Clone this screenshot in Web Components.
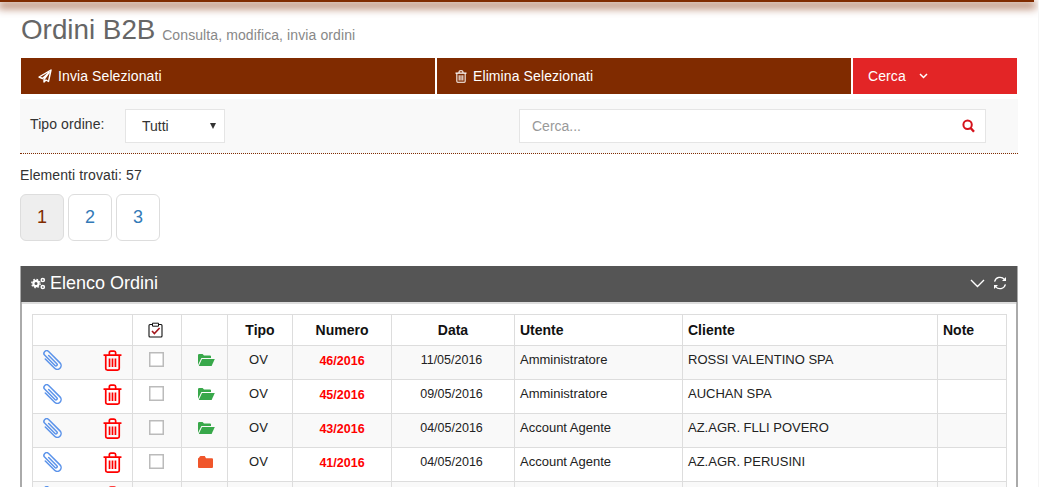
<!DOCTYPE html>
<html lang="it">
<head>
<meta charset="utf-8">
<title>Ordini B2B</title>
<style>
  html, body { margin: 0; height: 487px; overflow: hidden; background: #fff; }
  body { box-sizing: border-box; width: 1039px; border-right: 1px solid #f5f5f5; font-family: "Liberation Sans", Arial, sans-serif; font-size: 13px; color: #333; }
</style>
</head>
<body>
<top-strip></top-strip>
<page-title subtitle="Consulta, modifica, invia ordini">Ordini B2B</page-title>
<action-bar></action-bar>
<filter-bar></filter-bar>
<result-pager total="57"></result-pager>
<orders-panel heading="Elenco Ordini"><orders-table></orders-table></orders-panel>

<script>
// icons, all hand drawn
const ICON_PLANE = `<svg width="14" height="14" viewBox="0 0 14 14" fill="none" stroke="#fff" stroke-width="1.4" stroke-linejoin="round"><path d="M13 1L1 8l3.5 1.5L11 3.5l-5 7V13l2-2 2.5 1.5z"/></svg>`;
const ICON_TRASH = `<svg viewBox="0 0 18 20" fill="none" stroke="currentColor" stroke-width="1.6"><path d="M0.5 4.8h17M6 4.8V2.6Q6 1 7.5 1h3Q12 1 12 2.6v2.2M2.6 4.8v12.6Q2.6 19 4.2 19h9.6q1.6 0 1.6-1.6V4.8M6.2 8v8M9 8v8M11.8 8v8"/></svg>`;
const ICON_CLIP = `<svg width="20" height="20" viewBox="0 0 20 20" fill="none" stroke="#5b93ea" stroke-width="1.5" stroke-linecap="round"><g transform="rotate(-45 10 10)"><path d="M6 4.5v13.2a3.8 3.8 0 0 0 7.6 0V1.6a2.7 2.7 0 0 0-5.4 0V16a1.3 1.3 0 0 0 2.6 0V4.5"/></g></svg>`;
const ICON_OPEN = `<svg width="17" height="12" viewBox="0 0 17 12" fill="#38a84a"><path d="M0 11V1.2Q0 0 1.2 0h3.4L6 1.6h6q1 0 1 1V4H3.4L0 11z"/><path d="M4 5h12.8L13.6 12H.8z"/></svg>`;
const ICON_CLOSED = `<svg width="15" height="12" viewBox="0 0 15 12" fill="#f0562b"><path d="M0 2.4V11q0 1 1 1h13q1 0 1-1V3.2q0-1-1-1H8L6.8 0H3Q1.6 0 1.4 1.2z"/></svg>`;
const ICON_BOARD = `<svg width="15" height="16" viewBox="0 0 15 16" fill="none"><path d="M4.5 2.5H2Q1 2.5 1 3.5V14q0 1 1 1h11q1 0 1-1V3.5q0-1-1-1h-2.5" stroke="#111" stroke-width="1.1"/><path d="M4.5 1.2h6v3h-6z" stroke="#111" stroke-width="1"/><path d="M4 9l2.4 2.6L11.6 6" stroke="#a3161c" stroke-width="1.6"/></svg>`;
const ICON_COGS = `<svg width="15" height="13" viewBox="0 0 15 13" fill="none" stroke="#fff"><circle cx="5" cy="6.5" r="2.6" stroke-width="2.2"/><circle cx="5" cy="6.5" r="4.2" stroke-width="1.3" stroke-dasharray="1.6 1.7"/><circle cx="11.8" cy="3" r="1.6" stroke-width="1.5"/><circle cx="11.8" cy="10" r="1.6" stroke-width="1.5"/></svg>`;
const ICON_REFRESH = `<svg width="14" height="14" viewBox="0 0 14 14" fill="none" stroke="#fff" stroke-width="1.3"><path d="M1.6 5.6A5.6 5.6 0 0 1 11.4 3.4"/><path d="M12.4 8.4A5.6 5.6 0 0 1 2.6 10.6"/><path d="M13 1v4H9z" fill="#fff" stroke="none"/><path d="M1 13V9h4z" fill="#fff" stroke="none"/></svg>`;

class TopStrip extends HTMLElement {
  connectedCallback() {
    this.attachShadow({ mode: 'open' }).innerHTML = `
      <style>
        :host {
          display: block;
          width: 1034px;
          height: 2px;
          background: #802b00;
          box-shadow: 0 4px 9px 2px rgba(128,43,0,0.7);
        }
      </style>`;
  }
}

class PageTitle extends HTMLElement {
  connectedCallback() {
    this.attachShadow({ mode: 'open' }).innerHTML = `
      <style>
        :host {
          display: block;
          padding: 11px 0 0 21px;
          height: 45px;
          color: #666;
          font-size: 27.8px;
          line-height: 34px;
          white-space: nowrap;
        }
        small { font-size: 14px; letter-spacing: 0.1px; color: #888; margin-left: -1px; position: relative; top: 1px; }
      </style>
      <slot></slot> <small>${this.getAttribute('subtitle')}</small>`;
  }
}

class ActionBar extends HTMLElement {
  connectedCallback() {
    this.attachShadow({ mode: 'open' }).innerHTML = `
      <style>
        :host {
          display: grid;
          grid-template-columns: 414px 414px 164px;
          gap: 2px;
          width: 996px;
          height: 36px;
          margin-left: 21px;
          color: #fff;
          font-size: 14px;
          letter-spacing: 0.1px;
        }
        .item { display: flex; align-items: center; background: #802b00; }
        .item.send { padding-left: 17px; gap: 6px; }
        .item.del { padding-left: 18px; gap: 6px; }
        .item.del svg { width: 12px; height: 13px; }
        .item.find { padding-left: 15px; gap: 13px; background: #e32526; }
      </style>
      <div class="item send">${ICON_PLANE}<span>Invia Selezionati</span></div>
      <div class="item del">${ICON_TRASH}<span>Elimina Selezionati</span></div>
      <div class="item find"><span>Cerca</span>
        <svg width="9" height="6" viewBox="0 0 9 6" fill="none" stroke="#fff" stroke-width="1.5"><path d="M1 1l3.5 3.5L8 1"/></svg>
      </div>`;
  }
}

class FilterBar extends HTMLElement {
  connectedCallback() {
    this.attachShadow({ mode: 'open' }).innerHTML = `
      <style>
        :host {
          display: flex;
          align-items: center;
          box-sizing: border-box;
          width: 998px;
          height: 55px;
          margin: 5px 0 0 20px;
          padding: 0 32px 1px 10px;
          background: #f9f9f9;
          border-bottom: 1px dotted #802b00;
          color: #333;
        }
        label { width: 95px; font-size: 14px; letter-spacing: 0.1px; margin-top: -3px; }
        .box {
          display: flex;
          align-items: center;
          box-sizing: border-box;
          height: 34px;
          background: #fff;
          border: 1px solid #e5e5e5;
        }
        .select { width: 100px; padding: 0 8px 0 16px; font-size: 14px; justify-content: space-between; }
        .select i { border: 3.5px solid transparent; border-top: 6px solid #333; border-bottom: 0; }
        .search {
          width: 467px;
          margin-left: auto;
          padding: 0 10px 0 12px;
          font-size: 14px;
          color: #999;
          justify-content: space-between;
        }
      </style>
      <label>Tipo ordine:</label>
      <div class="box select"><span>Tutti</span><i></i></div>
      <div class="box search"><span>Cerca...</span>
        <svg width="13" height="14" viewBox="0 0 13 14" fill="none" stroke="#d5131c" stroke-width="2"><circle cx="5.6" cy="5.8" r="4.2"/><path d="M8.6 9l3.4 3.8" stroke-width="2.4"/></svg>
      </div>`;
  }
}

class ResultPager extends HTMLElement {
  connectedCallback() {
    const total = this.getAttribute('total');
    this.attachShadow({ mode: 'open' }).innerHTML = `
      <style>
        :host { display: block; margin: 13px 0 0 20px; color: #333; }
        .count { font-size: 14px; letter-spacing: 0.1px; line-height: 16px; }
        .pages { display: flex; gap: 4px; margin-top: 11px; }
        .page {
          display: flex;
          align-items: center;
          justify-content: center;
          box-sizing: border-box;
          width: 44px;
          height: 47px;
          border: 1px solid #ddd;
          border-radius: 6px;
          color: #337ab7;
          font-size: 18px;
        }
        .page.active { background: #eee; color: #802b00; }
      </style>
      <div class="count">Elementi trovati: ${total}</div>
      <div class="pages">
        <div class="page active">1</div>
        <div class="page">2</div>
        <div class="page">3</div>
      </div>`;
  }
}

class OrdersPanel extends HTMLElement {
  connectedCallback() {
    this.attachShadow({ mode: 'open' }).innerHTML = `
      <style>
        :host {
          display: block;
          box-sizing: border-box;
          width: 998px;
          margin: 25px 0 0 20px;
          border: solid #aaa;
          border-width: 0 2px;
        }
        .head {
          display: flex;
          align-items: center;
          gap: 4px;
          height: 36px;
          margin: 0 -1px;
          padding: 0 10px 2px 10px;
          box-sizing: border-box;
          background: #555;
          color: #fff;
          font-size: 18px;
        }
        .head .tools { display: flex; align-items: center; gap: 8px; margin-left: auto; }
        .body { border-top: 2px solid #ddd; padding: 10px 10px 0; }
      </style>
      <div class="head">
        ${ICON_COGS}<span>${this.getAttribute('heading')}</span>
        <div class="tools">
          <svg width="15" height="9" viewBox="0 0 15 9" fill="none" stroke="#fff" stroke-width="1.4"><path d="M1 1l6.5 6.5L14 1"/></svg>
          ${ICON_REFRESH}
        </div>
      </div>
      <div class="body"><slot></slot></div>`;
  }
}

// the fifth row only peeks into the frame, its icons show and nothing else
const ORDERS = [
  { num: '46/2016', date: '11/05/2016', user: 'Amministratore', client: 'ROSSI VALENTINO SPA', tipo: 'OV', open: true },
  { num: '45/2016', date: '09/05/2016', user: 'Amministratore', client: 'AUCHAN SPA', tipo: 'OV', open: true },
  { num: '43/2016', date: '04/05/2016', user: 'Account Agente', client: 'AZ.AGR. FLLI POVERO', tipo: 'OV', open: true },
  { num: '41/2016', date: '04/05/2016', user: 'Account Agente', client: 'AZ.AGR. PERUSINI', tipo: 'OV', open: false },
  { num: '', date: '', user: '', client: '', tipo: '', open: true },
];

const tableTemplate = document.createElement('template');
tableTemplate.innerHTML = `
  <style>
    :host { display: block; }
    table { border-collapse: collapse; table-layout: fixed; width: 975px; color: #222; }
    th, td { border: 1px solid #ddd; padding: 0 5px; vertical-align: top; }
    th { height: 31px; box-sizing: border-box; vertical-align: middle; font-size: 14px; color: #111; text-align: center; }
    td { height: 34px; box-sizing: border-box; padding-top: 6px; line-height: 16px; font-size: 13px; text-align: center; }
    tbody tr:nth-child(odd) td { background: #f9f9f9; }
    .left { text-align: left; }
    .date { font-size: 12.5px; padding-right: 8px; }
    .tipo { padding-right: 8px; }
    .num { color: #f00; font-weight: bold; font-size: 12.5px; padding-top: 7px; }
    .actions { padding: 4px 10px 0 9px; }
    .actions div { display: flex; justify-content: space-between; height: 21px; }
    .actions .trash { display: block; width: 19px; height: 21px; color: #f00; }
    .box { padding-right: 7px; }
    .check { display: block; box-sizing: border-box; width: 15px; height: 15px; margin: 0 auto; border: 1px solid #bbb; background: #fff; box-shadow: inset 0 0 0 .5px #bbb; }
    .folder { padding-left: 8px; }
    .folder svg { display: block; margin: 2px auto 0; }
    .folder.shut { padding-left: 6px; }
    th.board { padding-right: 9px; }
    th svg { display: block; margin: 0 auto; }
  </style>
  <table>
    <colgroup>
      <col style="width:100px"><col style="width:49px"><col style="width:46px"><col style="width:65px">
      <col style="width:99px"><col style="width:123px"><col style="width:168px"><col style="width:255px"><col>
    </colgroup>
    <thead>
      <tr>
        <th></th><th class="board">${ICON_BOARD}</th><th></th><th>Tipo</th><th>Numero</th><th>Data</th>
        <th class="left">Utente</th><th class="left">Cliente</th><th class="left">Note</th>
      </tr>
    </thead>
    <tbody></tbody>
  </table>
`;

class OrdersTable extends HTMLElement {
  connectedCallback() {
    this.attachShadow({ mode: 'open' }).appendChild(tableTemplate.content.cloneNode(true));
    this.shadowRoot.querySelector('tbody').innerHTML = ORDERS.map((o) => `
      <tr>
        <td class="actions"><div>${ICON_CLIP}<span class="trash">${ICON_TRASH}</span></div></td>
        <td class="box"><span class="check"></span></td>
        <td class="folder ${o.open ? '' : 'shut'}">${o.open ? ICON_OPEN : ICON_CLOSED}</td>
        <td class="tipo">${o.tipo}</td>
        <td class="num">${o.num}</td>
        <td class="date">${o.date}</td>
        <td class="left">${o.user}</td>
        <td class="left">${o.client}</td>
        <td></td>
      </tr>`).join('');
  }
}

customElements.define('top-strip', TopStrip);
customElements.define('page-title', PageTitle);
customElements.define('action-bar', ActionBar);
customElements.define('filter-bar', FilterBar);
customElements.define('result-pager', ResultPager);
customElements.define('orders-panel', OrdersPanel);
customElements.define('orders-table', OrdersTable);
</script>
</body>
</html>
